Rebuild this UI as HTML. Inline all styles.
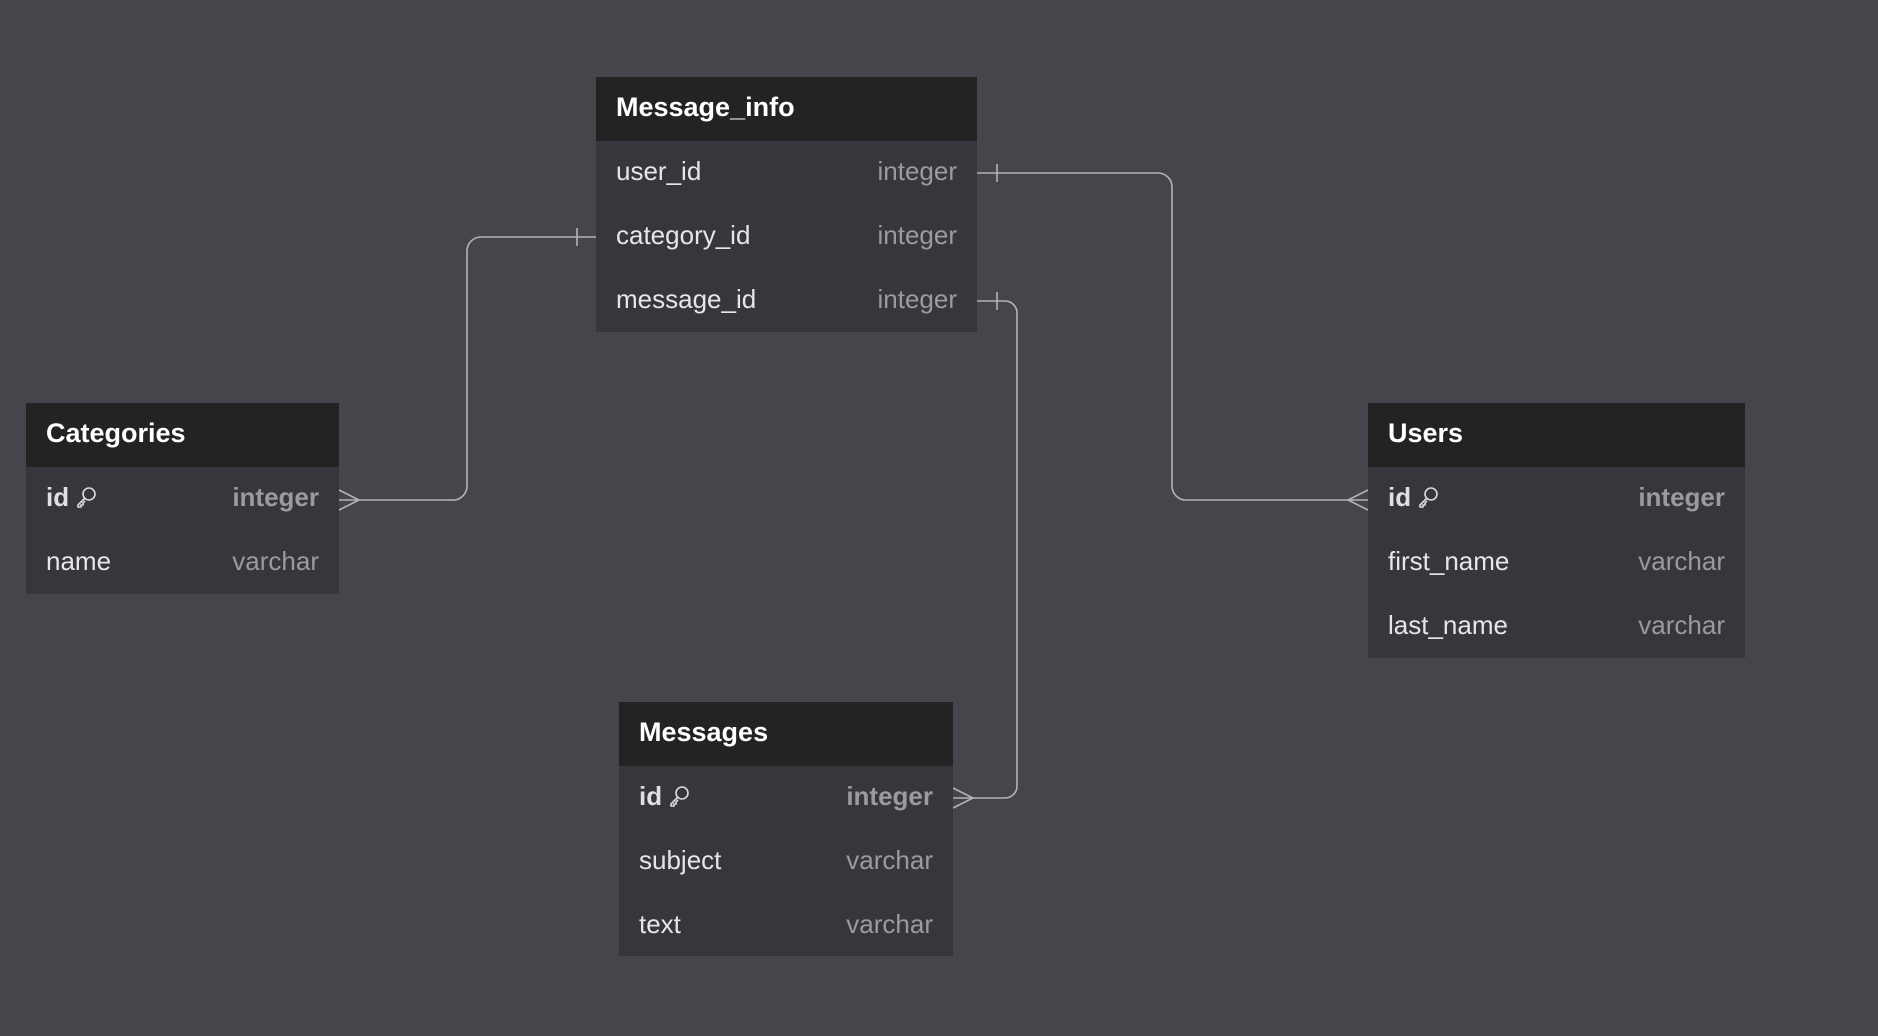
<!DOCTYPE html>
<html><head><meta charset="utf-8"><style>
body{margin:0;width:1878px;height:1036px;background:#45464c;font-family:"Liberation Sans","DejaVu Sans",sans-serif;overflow:hidden;position:relative}
.t{position:absolute;background:#36373c}
.h{height:64px;background:#232323;color:#fff;font-weight:bold;font-size:27px;line-height:60px;padding-left:20px}
.r{height:64px;line-height:60px;font-size:26px;color:#e6e6e6;padding:0 20px 0 20px;display:flex;justify-content:space-between}
.r span:last-child{color:#9b9b9e}
.b{font-weight:bold}
.b span:first-child{color:#e0e0e0}
.k{display:inline-block;vertical-align:middle;margin-left:6px;margin-top:-4px}
svg.l{position:absolute;left:0;top:0}
</style></head><body>
<svg class="l" width="1878" height="1036" fill="none" stroke="#b4b4b6" stroke-width="1.6">
<path d="M977 173 H1158 a14 14 0 0 1 14 14 V486 a14 14 0 0 0 14 14 H1368"/>
<path d="M997 164 v18"/>
<path d="M1368 490 L1348 500 L1368 510"/>
<path d="M596 237 H481 a14 14 0 0 0 -14 14 V486 a14 14 0 0 1 -14 14 H339"/>
<path d="M577 228 v18"/>
<path d="M339 490 L359 500 L339 510"/>
<path d="M977 301 H1005 a12 12 0 0 1 12 12 V786 a12 12 0 0 1 -12 12 H953"/>
<path d="M997 292 v18"/>
<path d="M953 788 L973 798 L953 808"/>
</svg>
<div class="t" style="left:596px;top:77px;width:381px;height:255px">
<div class="h">Message_info</div>
<div class="r"><span>user_id</span><span>integer</span></div>
<div class="r"><span>category_id</span><span>integer</span></div>
<div class="r"><span>message_id</span><span>integer</span></div>
</div>
<div class="t" style="left:26px;top:403px;width:313px;height:191px">
<div class="h">Categories</div>
<div class="r b"><span>id<svg class="k" width="22" height="22" viewBox="0 0 22 22" fill="none" stroke="#ddd" stroke-width="1.6"><circle cx="14" cy="8" r="6"/><path d="M10 12 L3 19 L3 21 L6 21 L6 19 L8 19 L8 17 L10 15"/></svg></span><span>integer</span></div>
<div class="r"><span>name</span><span>varchar</span></div>
</div>
<div class="t" style="left:1368px;top:403px;width:377px;height:255px">
<div class="h">Users</div>
<div class="r b"><span>id<svg class="k" width="22" height="22" viewBox="0 0 22 22" fill="none" stroke="#ddd" stroke-width="1.6"><circle cx="14" cy="8" r="6"/><path d="M10 12 L3 19 L3 21 L6 21 L6 19 L8 19 L8 17 L10 15"/></svg></span><span>integer</span></div>
<div class="r"><span>first_name</span><span>varchar</span></div>
<div class="r"><span>last_name</span><span>varchar</span></div>
</div>
<div class="t" style="left:619px;top:702px;width:334px;height:254px">
<div class="h">Messages</div>
<div class="r b"><span>id<svg class="k" width="22" height="22" viewBox="0 0 22 22" fill="none" stroke="#ddd" stroke-width="1.6"><circle cx="14" cy="8" r="6"/><path d="M10 12 L3 19 L3 21 L6 21 L6 19 L8 19 L8 17 L10 15"/></svg></span><span>integer</span></div>
<div class="r"><span>subject</span><span>varchar</span></div>
<div class="r"><span>text</span><span>varchar</span></div>
</div>
</body></html>
